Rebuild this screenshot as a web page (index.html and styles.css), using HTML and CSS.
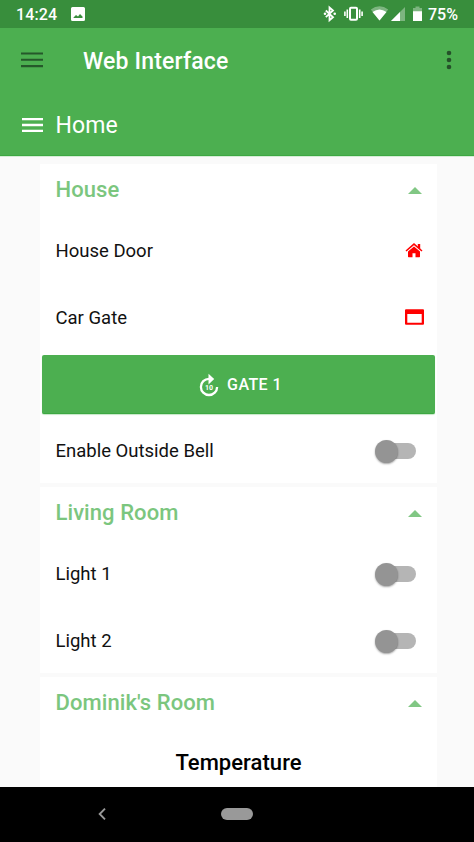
FILE: index.html
```html
<!DOCTYPE html>
<html lang="en">
<head>
<meta charset="utf-8">
<title>Web Interface</title>
<link rel="stylesheet" href="styles.css">
</head>
<body>
<div class="status">
  <span class="clock">14:24</span>
  <svg class="photo" width="14" height="14" viewBox="0 0 14 14"><path fill="#fff" fill-rule="evenodd" d="M1.500 0h11A1.500 1.500 0 0 1 14 1.500v11a1.500 1.500 0 0 1-1.500 1.500h-11A1.500 1.500 0 0 1 0 12.500v-11A1.500 1.500 0 0 1 1.500 0zM2.500 11h9V9.500L9 7 7 9.500 5 8l-2.500 2.500z"/></svg>
  <svg class="indicators" width="100" height="18" viewBox="322 5 100 18">
    <path d="M325.800 10.500l7.200 6.700-3.500 3V7.500l3.500 3-7.200 6.700" fill="none" stroke="#fff" stroke-width="1.800"/>
    <circle cx="325" cy="13.800" r="1.300" fill="#fff"/><circle cx="334.700" cy="13.800" r="1.300" fill="#fff"/>
    <rect x="350" y="7.800" width="7" height="12" rx="1" fill="none" stroke="#fff" stroke-width="2"/>
    <path d="M347.300 9.500v8.500M359.700 9.500v8.500M344.900 11.500v4.500M362.100 11.500v4.500" stroke="#fff" stroke-width="1.600"/>
    <path d="M370.800 9.500Q379.500 3 388.200 9.500L379.500 20.500z" fill="#fff" opacity=".35"/>
    <path d="M372.500 12Q379.500 7 386.500 12L379.500 20.500z" fill="#fff"/>
    <path d="M405 7v14h-14z" fill="#fff" opacity=".35"/>
    <path d="M400 12v9h-9z" fill="#fff"/>
    <path d="M413 11.500V8h2.500V6.500h4V8h2.500v3.500z" fill="#fff" opacity=".35"/>
    <path d="M413 11.200h9v9.800h-9z" fill="#fff"/>
  </svg>
  <span class="charge">75%</span>
</div>
<header class="appbar">
  <div class="bar">
    <svg class="menu" width="22" height="16" viewBox="0 0 22 16"><path d="M0 1.500h22M0 7.800h22M0 14.100h22" stroke="#25582a" stroke-width="2.100"/></svg>
    <h1>Web Interface</h1>
    <svg class="more" width="6" height="20" viewBox="0 0 6 20"><g fill="#25502a"><circle cx="3" cy="3" r="2.300"/><circle cx="3" cy="10" r="2.300"/><circle cx="3" cy="17" r="2.300"/></g></svg>
  </div>
  <div class="bar page">
    <svg class="menu" width="21" height="16" viewBox="0 0 21 16"><path d="M0 2.100h21M0 8h21M0 13.900h21" stroke="#fff" stroke-width="2.300"/></svg>
    <h2>Home</h2>
  </div>
</header>
<main>
  <section class="card house">
    <h3><span>House</span><i class="caret"></i></h3>
    <div class="row"><span>House Door</span>
      <svg class="home" width="18" height="15" viewBox="0 0 18 15"><path fill="#f00" d="M9 3.600L3 8.600v5q0 .6.600.6h3.900v-3.900h3v3.900h3.900q.6 0 .6-.6v-5z"/><path d="M1 8l8-6.900L17 8" fill="none" stroke="#f00" stroke-width="1.500"/><path d="M12.800.9h2.400v5.300l-2.400-2z" fill="#f00"/></svg>
    </div>
    <div class="row"><span>Car Gate</span>
      <svg class="window" width="19" height="16" viewBox="0 0 19 16"><path fill="#f00" fill-rule="evenodd" d="M1 .3h17q1 0 1 1v13.400q0 1-1 1H1q-1 0-1-1V1.300q0-1 1-1zM2.300 4.900v8.800h14.400V4.900z"/></svg>
    </div>
    <div class="action"><button type="button">
      <svg width="20" height="24" viewBox="0 0 20 24"><path d="M10 5.800A8.100 8.100 0 1 0 18.100 13.900" fill="none" stroke="#fff" stroke-width="2.300"/><path d="M9.500.7l5.700 5.400-5.700 5.400z" fill="#fff"/><text x="10" y="16.800" text-anchor="middle" class="ten">10</text></svg>
      <span>GATE 1</span></button></div>
    <div class="row bell"><span>Enable Outside Bell</span><i class="switch"></i></div>
  </section>
  <section class="card living">
    <h3><span>Living Room</span><i class="caret"></i></h3>
    <div class="row"><span>Light 1</span><i class="switch"></i></div>
    <div class="row"><span>Light 2</span><i class="switch"></i></div>
  </section>
  <section class="card dominik">
    <h3><span>Dominik's Room</span><i class="caret"></i></h3>
    <h4>Temperature</h4>
  </section>
</main>
<nav>
  <svg class="back" width="8" height="12" viewBox="0 0 8 12"><path d="M7 .7L1.700 6 7 11.300" fill="none" stroke="#999" stroke-width="1.900"/></svg>
  <i class="pill"></i>
</nav>
</body>
</html>
```
FILE: styles.css
```css
* { box-sizing: border-box; }
body { margin: 0; width: 474px; height: 842px; overflow: hidden; display: flex; flex-direction: column; background: #fafafa; color: #111; font-family: Roboto, sans-serif; }
svg { display: block; flex: none; }
h1, h2, h3, h4 { margin: 0; }
.status { height: 28px; flex: none; background: #388e3c; color: #fff; display: flex; align-items: center; padding: 0 16px; font-size: 16px; font-weight: 500; }
.clock { width: 55px; letter-spacing: .1px; padding-top: 1px; }
.indicators { margin-left: 237px; }
.charge { margin-left: 6px; padding-top: 1px; white-space: nowrap; }
.appbar { height: 128px; flex: none; background: #4caf50; border-bottom: 1px solid #3da842; box-shadow: 0 1px 0 #d5edd6; }
.bar { height: 65px; display: flex; align-items: center; padding: 0 22px 0 21px; }
.bar h1 { margin-left: 40px; font-size: 23px; font-weight: 500; color: #fff; flex: 1; letter-spacing: .17px; padding-top: 1px; }
.bar .more { margin-top: -1px; }
.bar .menu { margin-top: -1px; }
.bar.page { height: 63px; padding-left: 22px; }
.page h2 { margin-left: 12.500px; font-size: 23px; font-weight: 400; color: #fff; padding-top: 1px; letter-spacing: .1px; }
.bar.page .menu { margin-top: 1px; }
main { height: 631px; flex: none; padding: 8px 37px 0 40px; overflow: hidden; display: flex; flex-direction: column; gap: 4.500px; }
.card { background: #fff; flex: none; overflow: hidden; }
.house { height: 318.500px; }
.living { height: 185.500px; }
.dominik { height: 110px; }
h3 { height: 53px; padding: 0 15px 2px 15.500px; display: flex; justify-content: space-between; align-items: center; font-size: 22px; font-weight: 500; color: #7bc67e; letter-spacing: .07px; }
.caret { border: 6.500px solid transparent; border-top: 0; border-bottom: 7px solid #81c784; border-left-width: 6.500px; width: 0; height: 0; margin-top: 1px; border-left: 7px solid transparent; border-right: 7px solid transparent; }
.row { height: 67px; padding: 0 14px 0 15.500px; display: flex; justify-content: space-between; align-items: center; font-size: 18.500px; letter-spacing: 0; }
.bell { height: 66px; }
.window { margin: -1px -1px 0 0; }
.action { height: 67px; padding: 4px 2px; }
button { width: 393px; height: 59px; border: 0; border-bottom: 1px solid #3da842; border-radius: 2px; background: #4caf50; color: #fff; display: flex; align-items: center; justify-content: center; gap: 8px; padding: 0 0 0 4px; font: 500 16px Roboto, sans-serif; letter-spacing: .4px; box-shadow: 0 1px 1px #c5e7c6; }
button svg { margin-top: 1px; }
.ten { font: 700 7px Roboto, sans-serif; fill: #fff; letter-spacing: 0; }
.switch { width: 34px; height: 16px; border-radius: 8px; background: #b5b5b5; margin-right: 7px; display: flex; align-items: center; }
.living .switch { margin-top: 1px; }
.switch::before { content: ""; width: 23px; height: 23px; border-radius: 50%; background: #949494; margin-left: -7px; flex: none; box-shadow: 0 1px 2px rgba(0,0,0,.35); }
h4 { height: 67px; text-align: center; line-height: 66px; font-size: 22px; font-weight: 500; letter-spacing: .05px; color: #000; }
nav { height: 55px; flex: none; background: #000; display: flex; align-items: center; padding: 0 0 1px 98px; }
.pill { width: 32px; height: 12px; border-radius: 6px; background: #999; margin-left: 115px; }
```
